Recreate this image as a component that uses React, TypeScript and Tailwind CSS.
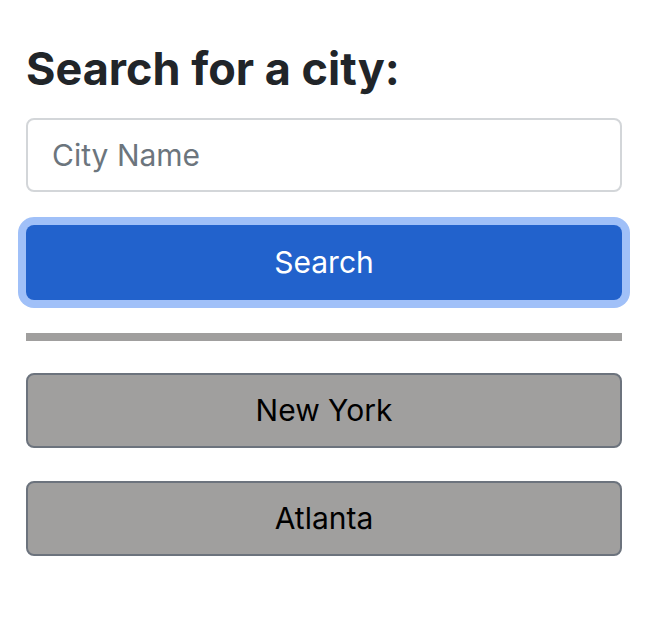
const cities = ["New York", "Atlanta"];

export default function App() {
  return (
    <div className="min-h-screen bg-white pl-[26px] pr-[48px] pt-[43px] font-['Inter','Liberation_Sans',sans-serif]">
      <h2 className="text-[45px] font-bold leading-[52px] text-[#212529]">
        Search for a city:
      </h2>
      <input
        type="text"
        placeholder="City Name"
        className="mt-[23px] block h-[74px] w-full rounded-lg border-2 border-[#d3d6d9] px-6 text-[30px] text-[#212529] outline-none placeholder:text-[#6c757d]"
      />
      <button className="mt-[33px] block h-[75px] w-full rounded-lg bg-[#2262cc] text-[30px] text-white ring-8 ring-[#a0c0f8]">
        Search
      </button>
      <hr className="mt-[33px] h-2 border-0 bg-[#a09f9e]" />
      <div className="mt-[32px] flex flex-col gap-[33px]">
        {cities.map((c) => (
          <button
            key={c}
            className="block h-[75px] w-full rounded-lg border-2 border-[#6c737d] bg-[#a09f9e] text-[30px] text-black"
          >
            {c}
          </button>
        ))}
      </div>
    </div>
  );
}
